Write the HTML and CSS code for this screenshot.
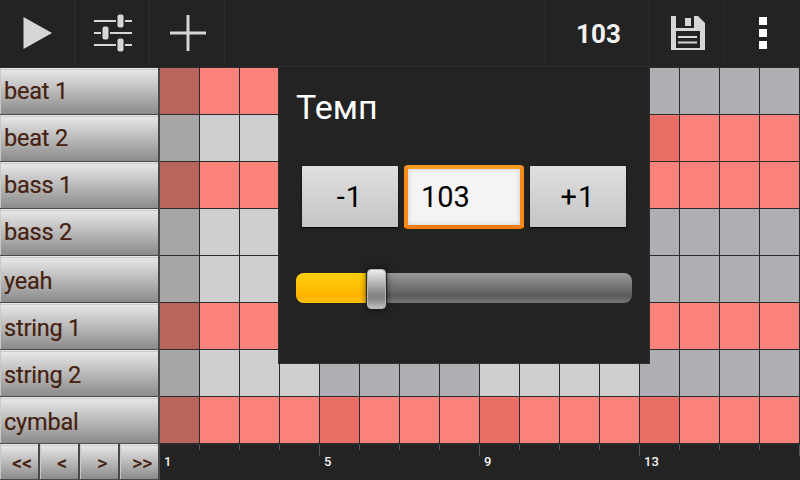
FILE: index.html
```
<!DOCTYPE html>
<html lang="ru">
<head>
  <meta charset="UTF-8" />
  <title>Drum Machine</title>
  <link rel="stylesheet" href="styles.css">
</head>
<body>
  <div class="toolbar">
    <div class="tool">
      <svg width="74" height="66"><path d="M23.5 17 L52 33 L23.5 49 Z" fill="#d6d6d6" /></svg>
    </div>
    <div class="tool">
      <svg width="74" height="66" fill="#d6d6d6">
        <path d="M19 20h22v2h-22z M50 20h7v2h-7z M19 32h7v2h-7z M35 32h22v2h-22z M19 44h22v2h-22z M50 44h7v2h-7z" />
        <rect x="42.5" y="14.5" width="6" height="13" rx="2" />
        <rect x="27.5" y="26.5" width="6" height="13" rx="2" />
        <rect x="42.5" y="38.5" width="6" height="13" rx="2" />
      </svg>
    </div>
    <div class="tool">
      <svg width="74" height="66"><path d="M36.5 15h3v16.5h16.500v3h-16.500v16.500h-3v-16.500h-16.500v-3h16.500z" fill="#d6d6d6" /></svg>
    </div>
    <div class="spacer"></div>
    <div class="tool bpm">103</div>
    <div class="tool">
      <svg width="74" height="66">
        <path d="M21 16h5v12h18v-12h4l7 7v27h-34z" fill="#d6d6d6" />
        <rect x="35" y="18" width="6" height="8" fill="#d6d6d6" />
        <path d="M26 31h24v17h-24z" fill="#232323" />
        <path d="M28 36h19v2h-19z M28 41.500h19v2h-19z" fill="#d6d6d6" />
      </svg>
    </div>
    <div class="tool more">
      <svg width="74" height="66"><path d="M34 17h8v8h-8z M34 29h8v8h-8z M34 41h8v8h-8z" fill="#fff" /></svg>
    </div>
  </div>

  <div class="sequencer">
    <div class="tracks">
      <button class="track">beat 1</button>
      <button class="track">beat 2</button>
      <button class="track">bass 1</button>
      <button class="track">bass 2</button>
      <button class="track low">yeah</button>
      <button class="track low">string 1</button>
      <button class="track low">string 2</button>
      <button class="track low">cymbal</button>
      <div class="pager">
        <button>&lt;&lt;</button>
        <button>&lt;</button>
        <button>&gt;</button>
        <button>&gt;&gt;</button>
      </div>
    </div>
    <div class="pattern">
      <div class="grid" id="grid"></div>
      <div class="ruler" id="ruler"></div>
    </div>
  </div>

  <div class="popup">
    <div class="popup-title">Темп</div>
    <div class="tempo-row">
      <button class="step">-1</button>
      <div class="tempo-input">103</div>
      <button class="step">+1</button>
    </div>
    <div class="slider">
      <div class="slider-fill"></div>
      <div class="slider-thumb"></div>
    </div>
  </div>

  <script>
    // x = note, X = accented note, . = empty
    const rows = [
      'xxxx............',
      '............Xxxx',
      'xxxxxxxxxxxxxxxx',
      '................',
      '................',
      'xxxxxxxxxxxxxxxx',
      '................',
      'xxxxXxxxXxxxXxxx'
    ];
    const grid = document.getElementById('grid');
    const ruler = document.getElementById('ruler');

    rows.forEach(row => {
      [...row].forEach((c, i) => {
        const cell = document.createElement('div');
        cell.className = 'cell';
        if (Math.floor(i / 4) % 2) cell.classList.add('alt');
        if (c !== '.') cell.classList.add('on');
        if (c === 'X') cell.classList.add('accent');
        if (i === 0) cell.classList.add('current');
        grid.appendChild(cell);
      });
    });

    for (let i = 0; i < 16; i++) {
      const mark = document.createElement('div');
      mark.className = i % 4 === 3 ? 'mark long' : 'mark';
      if (i % 4 === 0) mark.textContent = i + 1;
      ruler.appendChild(mark);
    }
  </script>
</body>
</html>
```
FILE: styles.css
```
* {
  box-sizing: border-box;
}
body {
  margin: 0;
  width: 800px;
  height: 480px;
  overflow: hidden;
  background: #232323;
  font-family: Roboto, sans-serif;
}
button {
  display: block;
  margin: 0;
  padding: 0;
  border: none;
  font-family: inherit;
}
.toolbar {
  display: flex;
  height: 68px;
  padding-bottom: 2px;
  border-bottom: 1px solid #2c2c2c;
}
.tool {
  width: 75px;
  border-right: 1px solid #2d2d2d;
}
.tool svg {
  display: block;
}
.spacer {
  flex: 1;
  border-right: 1px solid #2d2d2d;
}
.bpm {
  width: 104px;
  padding-left: 2px;
  line-height: 68px;
  text-align: center;
  font-size: 26px;
  font-weight: bold;
  color: #f3f3f3;
}
.more {
  border-right: none;
}
.sequencer {
  display: flex;
  height: 412px;
}
.tracks {
  width: 160px;
  background: #484848;
}
.track {
  width: 158px;
  height: 46px;
  margin-bottom: 1px;
  padding: 0 0 0 3px;
  border-left: 1px solid #c8c8c8;
  text-align: left;
  font-size: 23.5px;
  letter-spacing: -0.2px;
  line-height: 46px;
  color: #46210f;
  -webkit-text-stroke: 0.2px #46210f;
  background: linear-gradient(#e8e8e8 0 1px, #c9c9c9 1px 2px, #e6e6e6 2px, #8b8b8b);
}
.low {
  padding-top: 4px;
  line-height: 42px;
}
.pager {
  display: flex;
  gap: 2px;
  height: 35px;
}
.pager button {
  width: 38px;
  padding-left: 5px;
  border-left: 1px solid #c8c8c8;
  font-size: 20px;
  font-weight: 500;
  letter-spacing: -0.3px;
  line-height: 38px;
  color: #46210f;
  background: linear-gradient(#e8e8e8 0 1px, #c9c9c9 1px 2px, #e6e6e6 2px, #8b8b8b);
}
.grid {
  display: grid;
  grid-template-columns: repeat(16, 40px);
  grid-auto-rows: 47px;
}
.cell {
  border-right: 1px solid #2b2b2b;
  border-bottom: 1px solid #2b2b2b;
  background: #cfcfd1;
}
.alt {
  background: #afaeb3;
}
.on {
  background: #fc837b;
}
.accent {
  background: linear-gradient(#ee7970 0 1px, #e76f66 1px);
}
.current {
  background: #a7a5a8;
}
.current.on {
  background: #b8655e;
}
.ruler {
  display: flex;
  height: 36px;
  border-top: 1px solid #2c2c2c;
}
.mark {
  width: 40px;
  padding-left: 4px;
  font-size: 13px;
  font-weight: 500;
  line-height: 34px;
  color: #f5f5f5;
  background: linear-gradient(#555, #555) no-repeat right top / 1px 5px;
}
.long {
  background-size: 1px 11px;
}
/* tempo window over the pattern grid */
.popup {
  position: absolute;
  left: 278px;
  top: 66px;
  width: 372px;
  height: 298px;
  padding: 0 17px;
  border: 1px solid #303030;
  background: #232323;
}
.popup-title {
  padding-top: 19px;
  height: 97px;
  font-size: 34px;
  line-height: 42px;
  color: #fff;
}
.tempo-row {
  display: flex;
  gap: 6px;
  height: 66px;
  padding: 1px 0 0 6px;
}
.step {
  width: 96px;
  height: 61px;
  margin-top: 1px;
  border-radius: 1px;
  font-size: 29px;
  letter-spacing: 1px;
  line-height: 63px;
  color: #000;
  background: linear-gradient(#dfdfdf, #c5c5c5);
  box-shadow: 0 1px 2px #000;
}
.tempo-input {
  width: 120px;
  height: 64px;
  padding-left: 13px;
  border: 4px solid #f98c1a;
  border-color: #fd9c27 #f98c1a #f27c0b;
  border-radius: 4px;
  font-size: 29px;
  line-height: 57px;
  color: #000;
  background: #f4f4f4;
  box-shadow: inset 0 0 5px #ccc;
}
.slider {
  position: relative;
  width: 336px;
  height: 30px;
  margin-top: 43px;
  border-radius: 8px;
  background: linear-gradient(#989898, #5b5e5a 75%, #747474);
}
.slider-fill {
  width: 80px;
  height: 30px;
  border-radius: 8px 0 0 8px;
  background: linear-gradient(#ffd008, #ffb300 75%, #ffc107);
}
.slider-thumb {
  position: absolute;
  left: 71px;
  top: -4px;
  width: 19px;
  height: 40px;
  border: 1px solid #b5b5b5;
  border-radius: 4px;
  background: linear-gradient(#ececec, #858585 65%, #858585 75%, #bdbdbd);
  box-shadow: 0 0 1px 1px #222, 0 0 7px rgba(0, 0, 0, .7);
}
```
